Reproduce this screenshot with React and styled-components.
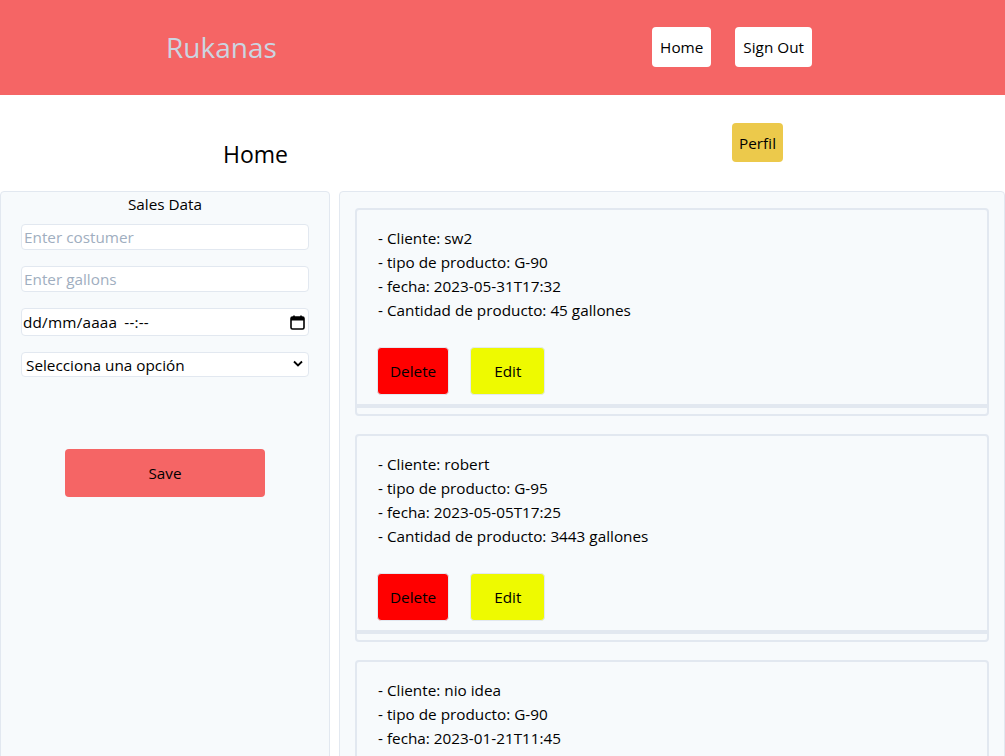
import React from 'react';
import styled, { createGlobalStyle } from 'styled-components';

const GlobalStyle = createGlobalStyle`
  body {
    margin: 0;
    background: #ffffff;
    color: #000000;
    font-family: "Open Sans", "Noto Sans", sans-serif;
    font-size: 15.3px;
    line-height: 24px;
  }
  * {
    box-sizing: border-box;
  }
`;

const Header = styled.header`
  height: 95px;
  background: #f56565;
  display: flex;
  align-items: center;
  justify-content: space-between;
  padding: 0 193px 0 166px;
`;

const Logo = styled.h1`
  margin: 0 0 2px;
  font-size: 28px;
  line-height: 40px;
  font-weight: 400;
  color: #cbd5e0;
`;

const Nav = styled.nav`
  display: flex;
  gap: 24px;
  margin-bottom: 1px;
`;

const NavButton = styled.button`
  height: 40px;
  padding: 0 8px;
  border: none;
  border-radius: 4px;
  background: #ffffff;
  color: #000000;
  font: inherit;
  cursor: pointer;
`;

const TitleRow = styled.div`
  height: 96px;
  display: flex;
  align-items: flex-start;
  justify-content: space-between;
  padding: 0 222px 0 223px;
`;

const PageTitle = styled.h2`
  margin: 43px 0 0;
  font-size: 23px;
  line-height: 32px;
  font-weight: 400;
`;

const ProfileButton = styled.button`
  margin-top: 28px;
  height: 39px;
  padding: 0 7px;
  border: none;
  border-radius: 4px;
  background: #ecc94b;
  color: #000000;
  font: inherit;
  cursor: pointer;
`;

const Main = styled.main`
  display: grid;
  grid-template-columns: 330px 1fr;
  gap: 9px;
`;

const Panel = styled.section`
  background: #f7fafc;
  border: 1px solid #e2e8f0;
  border-radius: 4px;
`;

const FormPanel = styled(Panel)`
  padding: 0 20px;
  display: flex;
  flex-direction: column;
`;

const FormTitle = styled.div`
  text-align: center;
  margin-bottom: 8px;
`;

const Fields = styled.div`
  display: flex;
  flex-direction: column;
  gap: 16px;
`;

const TextInput = styled.input`
  height: 26px;
  width: 100%;
  padding: 0 2px;
  border: 1px solid #e2e8f0;
  border-radius: 4px;
  background: #ffffff;
  font: inherit;
  color: #000000;
  outline: none;

  &::placeholder {
    color: #a0aec0;
  }
`;

const DateBox = styled.label`
  height: 28px;
  display: flex;
  align-items: center;
  gap: 7px;
  padding: 0 3px 0 1px;
  border: 1px solid #e2e8f0;
  border-radius: 4px;
  background: #ffffff;
  letter-spacing: 0.2px;

  svg {
    margin-left: auto;
  }
`;

const SelectWrap = styled.div`
  position: relative;
  height: 25px;
`;

const Select = styled.select`
  appearance: none;
  width: 100%;
  height: 25px;
  padding: 0 4px;
  border: 1px solid #e2e8f0;
  border-radius: 4px;
  background: #ffffff;
  font: inherit;
  color: #000000;
  outline: none;
`;

const Chevron = styled.svg`
  position: absolute;
  right: 6px;
  top: 8px;
  pointer-events: none;
`;

const SaveButton = styled.button`
  align-self: center;
  margin-top: 72px;
  width: 200px;
  height: 48px;
  border: none;
  border-radius: 4px;
  background: #f56565;
  color: #000000;
  font: inherit;
  cursor: pointer;
`;

const ListPanel = styled(Panel)`
  padding: 16px 15px;
  display: flex;
  flex-direction: column;
  gap: 18px;
`;

const Card = styled.article`
  border: 2px solid #e2e8f0;
  border-radius: 4px;
  background: #f7fafc;
  padding-bottom: 6px;
`;

const CardBody = styled.div`
  padding: 16px 21px 9px;
`;

const Line = styled.p`
  margin: 0;
`;

const Actions = styled.div`
  display: flex;
  gap: 21px;
  margin: 25px 0 0 -1px;
`;

const ActionButton = styled.button`
  height: 48px;
  padding: 0 ${(p) => p.$pad}px;
  border: 1px solid #e2e8f0;
  border-radius: 4px;
  background: ${(p) => p.$bg};
  color: #000000;
  font: inherit;
  cursor: pointer;
`;

const Bar = styled.div`
  height: 4px;
  background: #e2e8f0;
`;

const sales = [
  { client: 'sw2', type: 'G-90', date: '2023-05-31T17:32', gallons: 45 },
  { client: 'robert', type: 'G-95', date: '2023-05-05T17:25', gallons: 3443 },
  { client: 'nio idea', type: 'G-90', date: '2023-01-21T11:45', gallons: 120 },
];

const SaleCard = ({ sale }) => (
  <Card>
    <CardBody>
      <Line>- Cliente: {sale.client}</Line>
      <Line>- tipo de producto: {sale.type}</Line>
      <Line>- fecha: {sale.date}</Line>
      <Line>- Cantidad de producto: {sale.gallons} gallones</Line>
      <Actions>
        <ActionButton $bg="#ff0000" $pad={12}>Delete</ActionButton>
        <ActionButton $bg="#eefa00" $pad={23}>Edit</ActionButton>
      </Actions>
    </CardBody>
    <Bar />
  </Card>
);

export default function App() {
  return (
    <>
      <GlobalStyle />
      <Header>
        <Logo>Rukanas</Logo>
        <Nav>
          <NavButton>Home</NavButton>
          <NavButton>Sign Out</NavButton>
        </Nav>
      </Header>
      <TitleRow>
        <PageTitle>Home</PageTitle>
        <ProfileButton>Perfil</ProfileButton>
      </TitleRow>
      <Main>
        <FormPanel>
          <FormTitle>Sales Data</FormTitle>
          <Fields>
            <TextInput placeholder="Enter costumer" />
            <TextInput placeholder="Enter gallons" />
            <DateBox>
              <span>dd/mm/aaaa</span>
              <span>--:--</span>
              <svg width="15" height="15" viewBox="0 0 15 15" fill="none">
                <rect x="1" y="2" width="13" height="12" rx="1.5" stroke="#000" strokeWidth="1.6" />
                <rect x="1" y="2" width="13" height="3.5" fill="#000" />
                <line x1="4" y1="0.5" x2="4" y2="3" stroke="#000" strokeWidth="1.6" />
                <line x1="11" y1="0.5" x2="11" y2="3" stroke="#000" strokeWidth="1.6" />
              </svg>
            </DateBox>
            <SelectWrap>
              <Select defaultValue="">
                <option value="">Selecciona una opción</option>
                <option value="G-90">G-90</option>
                <option value="G-95">G-95</option>
              </Select>
              <Chevron width="10" height="7" viewBox="0 0 10 7" fill="none">
                <path d="M1 1.5L5 5.5L9 1.5" stroke="#000" strokeWidth="1.8" />
              </Chevron>
            </SelectWrap>
          </Fields>
          <SaveButton>Save</SaveButton>
        </FormPanel>
        <ListPanel>
          {sales.map((sale) => (
            <SaleCard key={sale.date} sale={sale} />
          ))}
        </ListPanel>
      </Main>
    </>
  );
}
